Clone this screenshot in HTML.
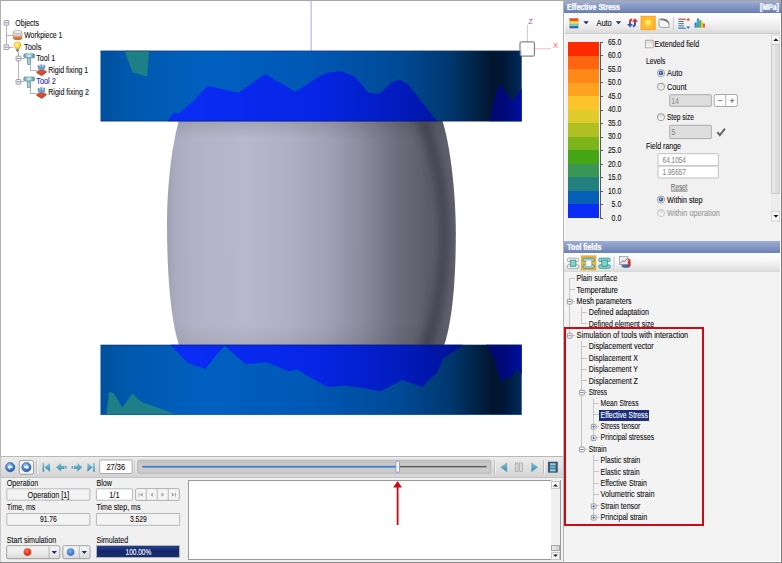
<!DOCTYPE html>
<html><head><meta charset="utf-8"><title>Effective Stress</title>
<style>
html,body{margin:0;padding:0;}
body{width:782px;height:563px;overflow:hidden;position:relative;background:#f0f0f0;font-family:"Liberation Sans",sans-serif;}
.a{position:absolute;box-sizing:border-box;}
.t{position:absolute;white-space:nowrap;line-height:10px;transform-origin:0 50%;-webkit-text-stroke:0.1px currentColor;}
svg{position:absolute;left:0;top:0;}
</style></head><body>
<div class="a" style="left:0.00px;top:0.00px;width:563.50px;height:456.00px;background:#fff;border-top:1px solid #a6a6a6;border-left:1px solid #b0b0b0;"></div>
<div class="a" style="left:562.60px;top:0.00px;width:1.00px;height:563.00px;background:#b4b4b4;"></div>
<svg width="563" height="456" viewBox="0 0 563 456">
<defs>
<linearGradient id="tb" x1="100.5" x2="521.5" y1="0" y2="0" gradientUnits="userSpaceOnUse">
<stop offset="0" stop-color="#00509c"/>
<stop offset="0.06" stop-color="#0058ac"/>
<stop offset="0.25" stop-color="#0060c0"/>
<stop offset="0.49" stop-color="#0058b6"/>
<stop offset="0.71" stop-color="#004a96"/>
<stop offset="0.83" stop-color="#003870"/>
<stop offset="0.89" stop-color="#002448"/>
<stop offset="0.935" stop-color="#00142c"/>
<stop offset="0.965" stop-color="#001a3c"/>
<stop offset="1" stop-color="#002a5e"/>
</linearGradient>
<linearGradient id="bb" x1="100.5" x2="521.5" y1="0" y2="0" gradientUnits="userSpaceOnUse">
<stop offset="0" stop-color="#0828d8"/>
<stop offset="0.2" stop-color="#0a2cf4"/>
<stop offset="0.5" stop-color="#0626e6"/>
<stop offset="0.7" stop-color="#021cc0"/>
<stop offset="0.82" stop-color="#0014a0"/>
<stop offset="0.92" stop-color="#000a70"/>
<stop offset="0.96" stop-color="#000878"/>
<stop offset="1" stop-color="#0010a0"/>
</linearGradient>
<linearGradient id="wp" x1="167" x2="456" y1="0" y2="0" gradientUnits="userSpaceOnUse">
<stop offset="0" stop-color="#a0a0b4"/>
<stop offset="0.03" stop-color="#ababbf"/>
<stop offset="0.1" stop-color="#b3b3c7"/>
<stop offset="0.27" stop-color="#b8b8cc"/>
<stop offset="0.42" stop-color="#b0b0c4"/>
<stop offset="0.55" stop-color="#a2a2b6"/>
<stop offset="0.67" stop-color="#8c8c9f"/>
<stop offset="0.8" stop-color="#6c6c7c"/>
<stop offset="0.9" stop-color="#5c5c6a"/>
<stop offset="1" stop-color="#62626f"/>
</linearGradient>
<filter id="bl" x="-50%" y="-20%" width="200%" height="140%"><feGaussianBlur stdDeviation="4.5"/></filter>
<clipPath id="wc"><path d="M178.8,121 C172,145 167,185 167,224 C167,272 170.5,320 179,345 L444.2,345 C452.6,320 455.8,278 455.8,234 C455.8,190 450,145 442.5,121 Z"/></clipPath>
<linearGradient id="wv" x1="0" x2="0" y1="121" y2="345" gradientUnits="userSpaceOnUse">
<stop offset="0" stop-color="#000" stop-opacity="0.10"/>
<stop offset="0.08" stop-color="#000" stop-opacity="0"/>
<stop offset="0.9" stop-color="#000" stop-opacity="0"/>
<stop offset="1" stop-color="#000" stop-opacity="0.06"/>
</linearGradient>
</defs>
<rect x="310.6" y="0" width="1" height="51" fill="#a8a8e8"/>
<path d="M178.8,121 C172,145 167,185 167,224 C167,272 170.5,320 179,345 L444.2,345 C452.6,320 455.8,278 455.8,234 C455.8,190 450,145 442.5,121 Z" fill="url(#wp)"/>
<path d="M178.8,121 C172,145 167,185 167,224 C167,272 170.5,320 179,345 L444.2,345 C452.6,320 455.8,278 455.8,234 C455.8,190 450,145 442.5,121 Z" fill="url(#wv)"/>
<g clip-path="url(#wc)"><path d="M421,118 C436,150 444,195 444.5,233 C444.5,272 438,318 425,348" fill="none" stroke="#363644" stroke-width="11" opacity="0.62" filter="url(#bl)"/></g>
<rect x="100.5" y="50.7" width="421.2" height="70.6" fill="url(#tb)"/>
<polygon points="124.5,50.7 149,50.7 147,76.5 132.4,72.3" fill="#1f7f86"/>
<polygon points="167.6,121.3 173.8,112.0 178.0,114.0 193.5,101.0 207.5,85.8 238.5,92.8 265.0,74.0 295.0,91.4 305.0,85.8 316.0,78.0 326.0,73.0 341.0,71.0 355.6,77.3 368.3,92.8 379.5,93.7 390.8,83.0 399.2,79.3 407.7,83.8 437.2,121.3" fill="url(#bb)"/>
<polygon points="489.2,121.3 496.3,90.0 501.0,84.4 511.7,101.3 521.7,88.6 521.7,121.3" fill="url(#bb)"/>
<rect x="100.5" y="50.7" width="421.2" height="0.8" fill="#203060" opacity="0.6"/>
<rect x="100.5" y="120.6" width="421.2" height="0.8" fill="#102050" opacity="0.6"/>
<rect x="100.5" y="344.8" width="421.2" height="70" fill="url(#tb)"/>
<polygon points="170.4,344.8 187.8,363.0 205.3,368.8 224.4,345.7 245.5,364.0 266.6,362.3 289.0,371.6 297.5,369.3 305.0,374.4 327.5,387.0 344.4,385.6 364.0,387.9 380.4,391.3 402.0,380.0 422.6,387.0 428.8,380.0 437.2,373.0 442.8,359.0 461.0,346.8 463.0,344.8" fill="url(#bb)"/>
<polygon points="486.0,344.8 487.8,347.6 493.5,357.5 500.5,381.4 511.8,375.8 517.4,368.8 521.7,374.4 521.7,344.8" fill="url(#bb)"/>
<polygon points="106.3,414.8 109.0,392.0 114.0,393.2 122.3,407.6 132.4,393.5 141.4,402.0 149.9,404.8 176.6,414.8" fill="#1f7f86"/>
<rect x="100.5" y="344.8" width="421.2" height="0.8" fill="#102050" opacity="0.6"/>
<rect x="100.5" y="414" width="421.2" height="0.8" fill="#0050c0" opacity="0.7"/>
<rect x="527" y="25" width="0.9" height="24" fill="#e6b8e6"/>
<rect x="527" y="48.3" width="24" height="0.9" fill="#ffb4b4"/>
<rect x="520" y="41.9" width="14.4" height="14.2" rx="1.2" fill="#fff" fill-opacity="0.75" stroke="#585858" stroke-width="0.9"/>
<text x="528.3" y="24" font-family="Liberation Sans" font-size="7.6" fill="#b050b0">Z</text>
<text x="553" y="47.8" font-family="Liberation Sans" font-size="7.6" fill="#ff5a5a">X</text>
</svg>
<div class="a" style="left:5.90px;top:25.50px;width:0.80px;height:18.80px;background:#b4b4b4;"></div>
<div class="a" style="left:6.30px;top:35.20px;width:6.70px;height:0.80px;background:#b4b4b4;"></div>
<div class="a" style="left:9.00px;top:46.60px;width:4.00px;height:0.80px;background:#b4b4b4;"></div>
<div class="a" style="left:18.00px;top:52.00px;width:0.80px;height:27.00px;background:#b4b4b4;"></div>
<div class="a" style="left:21.00px;top:58.00px;width:3.00px;height:0.80px;background:#b4b4b4;"></div>
<div class="a" style="left:21.00px;top:81.40px;width:3.00px;height:0.80px;background:#b4b4b4;"></div>
<div class="a" style="left:29.80px;top:63.50px;width:0.80px;height:7.10px;background:#b4b4b4;"></div>
<div class="a" style="left:30.20px;top:70.20px;width:6.80px;height:0.80px;background:#b4b4b4;"></div>
<div class="a" style="left:29.80px;top:87.00px;width:0.80px;height:6.30px;background:#b4b4b4;"></div>
<div class="a" style="left:30.20px;top:92.90px;width:6.80px;height:0.80px;background:#b4b4b4;"></div>
<svg class="a" style="left:1px;top:17px" width="12" height="12" viewBox="0 0 12 12"><rect x="3.05" y="3.45" width="4.70" height="4.70" rx="0.5" fill="#fdfdfd" stroke="#8a8a8a" stroke-width="0.85"/><rect x="4.00" y="5.40" width="2.8" height="0.8" fill="#4a5ab4"/></svg>
<svg class="a" style="left:1px;top:42px" width="12" height="12" viewBox="0 0 12 12"><rect x="3.05" y="2.75" width="4.70" height="4.70" rx="0.5" fill="#fdfdfd" stroke="#8a8a8a" stroke-width="0.85"/><rect x="4.00" y="4.70" width="2.8" height="0.8" fill="#4a5ab4"/></svg>
<svg class="a" style="left:13px;top:53px" width="12" height="12" viewBox="0 0 12 12"><rect x="3.15" y="3.15" width="4.70" height="4.70" rx="0.5" fill="#fdfdfd" stroke="#8a8a8a" stroke-width="0.85"/><rect x="4.10" y="5.10" width="2.8" height="0.8" fill="#4a5ab4"/></svg>
<svg class="a" style="left:13px;top:76px" width="12" height="12" viewBox="0 0 12 12"><rect x="3.05" y="3.45" width="4.70" height="4.70" rx="0.5" fill="#fdfdfd" stroke="#8a8a8a" stroke-width="0.85"/><rect x="4.00" y="5.40" width="2.8" height="0.8" fill="#4a5ab4"/></svg>
<div class="t" style="left:15px;top:19px;font-size:8.20px;color:#101010;transform:translate(0.30px,0.11px) scaleX(0.8561);">Objects</div>
<div class="t" style="left:24px;top:31px;font-size:8.20px;color:#101010;transform:translate(0.20px,0.41px) scaleX(0.8431);">Workpiece 1</div>
<div class="t" style="left:24px;top:42px;font-size:8.20px;color:#101010;transform:translate(0.00px,0.61px) scaleX(0.9089);">Tools</div>
<div class="t" style="left:36px;top:54px;font-size:8.20px;color:#101010;transform:translate(0.20px,0.01px) scaleX(0.8774);">Tool 1</div>
<div class="t" style="left:48px;top:66px;font-size:8.20px;color:#101010;transform:translate(0.20px,0.21px) scaleX(0.8542);">Rigid fixing 1</div>
<div class="t" style="left:36px;top:77px;font-size:8.20px;color:#2a1ec8;transform:translate(0.20px,0.31px) scaleX(0.9003);">Tool 2</div>
<div class="t" style="left:48px;top:88px;font-size:8.20px;color:#101010;transform:translate(0.20px,0.01px) scaleX(0.8669);">Rigid fixing 2</div>
<svg width="100" height="100" viewBox="0 0 100 100"><defs><linearGradient id="cy" x1="0" x2="0" y1="0" y2="1"><stop offset="0" stop-color="#f4f4f4"/><stop offset="0.45" stop-color="#d8c8c0"/><stop offset="0.75" stop-color="#e07830"/><stop offset="1" stop-color="#c85010"/></linearGradient><linearGradient id="hm" x1="0" x2="1" y1="0" y2="0"><stop offset="0" stop-color="#5aa0b4"/><stop offset="0.5" stop-color="#d4eef4"/><stop offset="1" stop-color="#4a8ca0"/></linearGradient><radialGradient id="bu" cx="0.4" cy="0.35" r="0.7"><stop offset="0" stop-color="#fff8b0"/><stop offset="0.6" stop-color="#ffd428"/><stop offset="1" stop-color="#e8a010"/></radialGradient></defs><path d="M13.2,32 L13.2,38 A4.4,1.8 0 0 0 22,38 L22,32 Z" fill="url(#cy)" stroke="#a05828" stroke-width="0.4"/><ellipse cx="17.6" cy="32" rx="4.4" ry="1.7" fill="#ececec" stroke="#909090" stroke-width="0.5"/><path d="M17.5,42 C14.6,42 13.6,44 13.9,45.6 C14.2,47.2 15.8,47.8 16.2,49.4 L18.8,49.4 C19.2,47.8 20.8,47.2 21.1,45.6 C21.4,44 20.4,42 17.5,42 Z" fill="url(#bu)" stroke="#d09010" stroke-width="0.4"/><rect x="16.3" y="49.4" width="2.4" height="1.7" fill="#4a78b0"/><rect x="16.9" y="51" width="1.2" height="0.8" fill="#405070"/><path d="M24.8,53.8 h8.6 a1,1 0 0 1 1,1 v2.2 a1,1 0 0 1 -1,1 h-8.6 a1,1 0 0 1 -1,-1 v-2.2 a1,1 0 0 1 1,-1 Z" fill="url(#hm)" stroke="#3c7488" stroke-width="0.5"/><rect x="27.6" y="58.0" width="2.8" height="6.4" fill="url(#hm)" stroke="#3c7488" stroke-width="0.5"/><path d="M24.8,76.9 h8.6 a1,1 0 0 1 1,1 v2.2 a1,1 0 0 1 -1,1 h-8.6 a1,1 0 0 1 -1,-1 v-2.2 a1,1 0 0 1 1,-1 Z" fill="url(#hm)" stroke="#3c7488" stroke-width="0.5"/><rect x="27.6" y="81.1" width="2.8" height="6.4" fill="url(#hm)" stroke="#3c7488" stroke-width="0.5"/><path d="M36.6,71.8 l4.4,-2.6 l5.4,2 l-4.6,3.6 Z" fill="#e4492a" stroke="#a82c10" stroke-width="0.4"/><path d="M36.6,71.8 l0,1.2 l5.2,3 l4.6,-3.6 l0,-1.2 l-4.6,3.6 Z" fill="#b83014"/><rect x="38.1" y="66.2" width="1.1" height="3.4" fill="#4c84bc"/><circle cx="38.6" cy="66.2" r="1.0" fill="#8cbce0" stroke="#3c6c9c" stroke-width="0.35"/><rect x="40.9" y="65.4" width="1.1" height="3.4" fill="#4c84bc"/><circle cx="41.4" cy="65.4" r="1.0" fill="#8cbce0" stroke="#3c6c9c" stroke-width="0.35"/><rect x="43.7" y="66.0" width="1.1" height="3.4" fill="#4c84bc"/><circle cx="44.2" cy="66.0" r="1.0" fill="#8cbce0" stroke="#3c6c9c" stroke-width="0.35"/><rect x="39.5" y="67.6" width="1.1" height="3.4" fill="#4c84bc"/><circle cx="40.0" cy="67.6" r="1.0" fill="#8cbce0" stroke="#3c6c9c" stroke-width="0.35"/><rect x="42.5" y="68.0" width="1.1" height="3.4" fill="#4c84bc"/><circle cx="43.0" cy="68.0" r="1.0" fill="#8cbce0" stroke="#3c6c9c" stroke-width="0.35"/><path d="M36.6,94.6 l4.4,-2.6 l5.4,2 l-4.6,3.6 Z" fill="#e4492a" stroke="#a82c10" stroke-width="0.4"/><path d="M36.6,94.6 l0,1.2 l5.2,3 l4.6,-3.6 l0,-1.2 l-4.6,3.6 Z" fill="#b83014"/><rect x="38.1" y="89.0" width="1.1" height="3.4" fill="#4c84bc"/><circle cx="38.6" cy="89.0" r="1.0" fill="#8cbce0" stroke="#3c6c9c" stroke-width="0.35"/><rect x="40.9" y="88.2" width="1.1" height="3.4" fill="#4c84bc"/><circle cx="41.4" cy="88.2" r="1.0" fill="#8cbce0" stroke="#3c6c9c" stroke-width="0.35"/><rect x="43.7" y="88.8" width="1.1" height="3.4" fill="#4c84bc"/><circle cx="44.2" cy="88.8" r="1.0" fill="#8cbce0" stroke="#3c6c9c" stroke-width="0.35"/><rect x="39.5" y="90.4" width="1.1" height="3.4" fill="#4c84bc"/><circle cx="40.0" cy="90.4" r="1.0" fill="#8cbce0" stroke="#3c6c9c" stroke-width="0.35"/><rect x="42.5" y="90.8" width="1.1" height="3.4" fill="#4c84bc"/><circle cx="43.0" cy="90.8" r="1.0" fill="#8cbce0" stroke="#3c6c9c" stroke-width="0.35"/></svg>
<div class="a" style="left:0.00px;top:456.00px;width:563.00px;height:1.00px;background:#b8b8b8;"></div>
<div class="a" style="left:0.00px;top:457.00px;width:562.60px;height:20.00px;background:linear-gradient(#ececec,#dedede 60%,#d4d4d4);border-left:1px solid #c0c0c0;"></div>
<div class="a" style="left:0.00px;top:477.00px;width:562.60px;height:86.00px;background:#f0f0f0;border-left:1px solid #c8c8c8;"></div>
<div class="a" style="left:0.00px;top:476.60px;width:562.60px;height:0.80px;background:#c4c4c4;"></div>
<div class="a" style="left:0.00px;top:562.00px;width:563.00px;height:1.00px;background:#8c8c8c;"></div>
<div class="a" style="left:96.40px;top:545.30px;width:83.80px;height:12.50px;background:#e4e4e4;border:0.7px solid #b4b4b4;"></div>
<div class="a" style="left:97.40px;top:546.40px;width:81.50px;height:10.20px;background:linear-gradient(#26408e,#16286c 45%,#1a2e74);"></div>
<div class="a" style="left:187.60px;top:479.60px;width:373.00px;height:80.60px;background:#fff;border:0.8px solid #9a9a9a;"></div>
<div class="a" style="left:551.20px;top:480.40px;width:8.60px;height:79.00px;background:#f0f0f0;"></div>
<div class="a" style="left:551.20px;top:481.40px;width:8.60px;height:8.00px;background:#f6f6f6;border:0.6px solid #c8c8c8;"></div>
<div class="a" style="left:551.20px;top:551.60px;width:8.60px;height:8.00px;background:#f6f6f6;border:0.6px solid #c8c8c8;"></div>
<div class="a" style="left:551.20px;top:545.40px;width:8.60px;height:6.00px;background:linear-gradient(90deg,#e8e8e8,#d0d0d0);border:0.6px solid #a8a8a8;"></div>
<svg width="563" height="563" viewBox="0 0 563 563"><path d="M553,486.6 h5 l-2.5,-2.6 Z" fill="#202020"/><path d="M553,554.4 h5 l-2.5,2.6 Z" fill="#202020"/></svg>
<svg width="563" height="563" viewBox="0 0 563 563"><defs><radialGradient id="cb" cx="0.4" cy="0.3" r="0.8"><stop offset="0" stop-color="#9cc4f4"/><stop offset="0.6" stop-color="#3c78d0"/><stop offset="1" stop-color="#2050a0"/></radialGradient><linearGradient id="tl" x1="0" x2="0" y1="0" y2="1"><stop offset="0" stop-color="#7cc4d8"/><stop offset="1" stop-color="#3a8ca8"/></linearGradient><radialGradient id="rb" cx="0.4" cy="0.35" r="0.7"><stop offset="0" stop-color="#ff7050"/><stop offset="1" stop-color="#d81808"/></radialGradient><radialGradient id="bb2" cx="0.4" cy="0.35" r="0.7"><stop offset="0" stop-color="#78b0f0"/><stop offset="1" stop-color="#2868c0"/></radialGradient><linearGradient id="btn" x1="0" x2="0" y1="0" y2="1"><stop offset="0" stop-color="#f6f6f6"/><stop offset="0.5" stop-color="#ececec"/><stop offset="1" stop-color="#d8d8d8"/></linearGradient></defs><rect x="99.70" y="460.00" width="32.40" height="13.50" rx="1.0" fill="#fff" stroke="#9c9c9c" stroke-width="0.80"/><rect x="6.80" y="488.80" width="83.00" height="11.40" rx="0.6" fill="#f3f3f3" stroke="#a8a8a8" stroke-width="0.80"/><rect x="96.40" y="488.80" width="36.00" height="11.40" rx="0.6" fill="#fff" stroke="#a8a8a8" stroke-width="0.80"/><rect x="6.80" y="513.50" width="83.00" height="11.80" rx="0.6" fill="#f3f3f3" stroke="#a8a8a8" stroke-width="0.80"/><rect x="96.40" y="513.50" width="83.20" height="11.80" rx="0.6" fill="#f3f3f3" stroke="#a8a8a8" stroke-width="0.80"/><g transform="translate(0,0.6)"><circle cx="10.2" cy="466.6" r="4.6" fill="url(#cb)" stroke="#284c90" stroke-width="0.6"/><path d="M7.4,466.6 l2.6,-2.4 v1.5 h2.4 v1.8 h-2.4 v1.5 Z" fill="#fff"/><rect x="19.3" y="459.8" width="14.2" height="13.8" rx="1.8" fill="#f6f6f6" stroke="#8c8c8c" stroke-width="0.8"/><circle cx="26.4" cy="466.6" r="4.6" fill="url(#cb)" stroke="#284c90" stroke-width="0.6"/><path d="M29.2,466.6 l-2.6,-2.4 v1.5 h-2.4 v1.8 h2.4 v1.5 Z" fill="#fff"/><rect x="36.2" y="460" width="0.8" height="13.5" fill="#b4b4b4"/><rect x="37" y="460" width="0.8" height="13.5" fill="#f8f8f8"/><rect x="42.6" y="462.3" width="1.6" height="8.8" fill="url(#tl)"/><path d="M50,462.3 L44.6,466.7 L50,471.1 Z" fill="url(#tl)"/><path d="M56,466.7 l5,-4.2 v2.6 h3.4 v3.2 h-3.4 v2.6 Z" fill="url(#tl)"/><rect x="65.2" y="465.4" width="1.4" height="2.6" fill="#4a9cb8"/><path d="M82.4,466.7 l-5,-4.2 v2.6 h-3.4 v3.2 h3.4 v2.6 Z" fill="url(#tl)"/><rect x="71.6" y="465.4" width="1.4" height="2.6" fill="#4a9cb8"/><rect x="93.2" y="462.3" width="1.6" height="8.8" fill="url(#tl)"/><path d="M87.4,462.3 L92.8,466.7 L87.4,471.1 Z" fill="url(#tl)"/></g><rect x="134.6" y="460" width="0.8" height="13.5" fill="#b4b4b4"/><rect x="135.4" y="460" width="0.8" height="13.5" fill="#f8f8f8"/><rect x="494.2" y="460" width="0.8" height="13.5" fill="#b4b4b4"/><rect x="495.0" y="460" width="0.8" height="13.5" fill="#f8f8f8"/><rect x="543.2" y="460" width="0.8" height="13.5" fill="#b4b4b4"/><rect x="544.0" y="460" width="0.8" height="13.5" fill="#f8f8f8"/><rect x="137.6" y="460.2" width="353.4" height="13" rx="1.5" fill="#cbcbcb" stroke="#b0b0b0" stroke-width="0.8"/><rect x="138.4" y="461" width="351.8" height="2.2" fill="#c0c0c0" opacity="0.7"/><rect x="142.6" y="465.9" width="344" height="1.5" fill="#5c5c5c"/><rect x="142.6" y="465.9" width="255" height="1.5" fill="#3c80e0"/><rect x="395.9" y="461.3" width="3.6" height="10.8" rx="0.8" fill="#f4f4f8" stroke="#7888c8" stroke-width="0.7"/><path d="M506.8,462.9 L500.8,467.3 L506.8,471.7 Z" fill="url(#tl)" stroke="#3880a0" stroke-width="0.3"/><rect x="515.2" y="463" width="2.8" height="8.6" fill="#d8d8d8" stroke="#9a9a9a" stroke-width="0.6"/><rect x="519.6" y="463" width="2.8" height="8.6" fill="#d8d8d8" stroke="#9a9a9a" stroke-width="0.6"/><path d="M531.6,462.9 L537.6,467.3 L531.6,471.7 Z" fill="url(#tl)" stroke="#3880a0" stroke-width="0.3"/><rect x="548.2" y="462" width="9.2" height="10.2" fill="#3a5878" stroke="#26384c" stroke-width="0.5"/><rect x="550" y="463.2" width="5.6" height="2.2" fill="#8cd0e0"/><rect x="550" y="466.2" width="5.6" height="2.2" fill="#70b8d0"/><rect x="550" y="469.2" width="5.6" height="2.2" fill="#8cd0e0"/><rect x="396.7" y="486" width="1.8" height="39" fill="#cc0a14"/><path d="M397.6,481 L393.2,487.6 L402,487.6 Z" fill="#cc0a14"/><rect x="6.6" y="545.7" width="53.2" height="13" rx="1.6" fill="url(#btn)" stroke="#8e8e8e" stroke-width="0.8"/><rect x="48.6" y="546.4" width="0.8" height="11.6" fill="#a8a8a8"/><circle cx="27.4" cy="552.1" r="3.8" fill="url(#rb)"/><path d="M51.6,550.9 h5.4 l-2.7,3 Z" fill="#1c2c84"/><rect x="62.8" y="545.7" width="27.2" height="13" rx="1.6" fill="url(#btn)" stroke="#8e8e8e" stroke-width="0.8"/><rect x="78.8" y="546.4" width="0.8" height="11.6" fill="#a8a8a8"/><circle cx="70.6" cy="552.1" r="3.8" fill="url(#bb2)"/><path d="M81.6,550.9 h5.4 l-2.7,3 Z" fill="#1c2c84"/><rect x="135.6" y="488.6" width="43.8" height="11.8" rx="1.4" fill="#f4f4f4" stroke="#a0a0a0" stroke-width="0.8"/><rect x="145.80" y="489" width="0.8" height="11" fill="#a8a8a8"/><rect x="156.80" y="489" width="0.8" height="11" fill="#a8a8a8"/><rect x="167.80" y="489" width="0.8" height="11" fill="#a8a8a8"/><rect x="138.5" y="492.6" width="0.9" height="4.2" fill="#a4a4a4"/><path d="M142.5,492.6 l-2.6,2.1 l2.6,2.1 Z" fill="#a4a4a4"/><path d="M152.9,492.6 l-2.6,2.1 l2.6,2.1 Z" fill="#a4a4a4"/><path d="M161.5,492.6 l2.6,2.1 l-2.6,2.1 Z" fill="#a4a4a4"/><rect x="175.0" y="492.6" width="0.9" height="4.2" fill="#a4a4a4"/><path d="M171.9,492.6 l2.6,2.1 l-2.6,2.1 Z" fill="#a4a4a4"/></svg>
<div class="t" style="left:106px;top:462px;font-size:8.20px;color:#101010;transform:translate(0.40px,0.61px) scaleX(0.9162);">27/36</div>
<div class="t" style="left:6px;top:478px;font-size:8.20px;color:#101010;transform:translate(0.80px,0.81px) scaleX(0.8719);">Operation</div>
<div class="t" style="left:96px;top:478px;font-size:8.20px;color:#101010;transform:translate(0.40px,0.81px) scaleX(0.8664);">Blow</div>
<div class="t" style="left:27px;top:490px;font-size:8.20px;color:#101010;transform:translate(0.60px,0.71px) scaleX(0.8775);">Operation [1]</div>
<div class="t" style="left:109px;top:490px;font-size:8.20px;color:#101010;transform:translate(0.20px,0.71px) scaleX(0.9123);">1/1</div>
<div class="t" style="left:6px;top:503px;font-size:8.20px;color:#101010;transform:translate(0.80px,0.31px) scaleX(0.8561);">Time, ms</div>
<div class="t" style="left:96px;top:503px;font-size:8.20px;color:#101010;transform:translate(0.40px,0.31px) scaleX(0.8636);">Time step, ms</div>
<div class="t" style="left:39px;top:515px;font-size:8.20px;color:#101010;transform:translate(0.90px,0.31px) scaleX(0.8284);">91.76</div>
<div class="t" style="left:129px;top:515px;font-size:8.20px;color:#101010;transform:translate(0.90px,0.31px) scaleX(0.8284);">3.529</div>
<div class="t" style="left:6px;top:535px;font-size:8.20px;color:#101010;transform:translate(0.80px,0.91px) scaleX(0.8741);">Start simulation</div>
<div class="t" style="left:96px;top:535px;font-size:8.20px;color:#101010;transform:translate(0.40px,0.91px) scaleX(0.8776);">Simulated</div>
<div class="t" style="left:125px;top:547px;font-size:8.20px;color:#fff;transform:translate(0.50px,0.71px) scaleX(0.7970);">100.00%</div>
<div class="a" style="left:563.60px;top:0.00px;width:218.40px;height:563.00px;background:#f1f1f1;"></div>
<div class="a" style="left:563.60px;top:0.00px;width:218.40px;height:1.00px;background:#a6a6a6;"></div>
<div class="a" style="left:563.60px;top:1.00px;width:217.40px;height:12.40px;background:linear-gradient(#9eadd2,#8597c4 45%,#6f84b6 90%,#6478aa);"></div>
<div class="a" style="left:563.60px;top:13.20px;width:217.40px;height:19.80px;background:linear-gradient(#ffffff,#f8f8f8 35%,#e6e6e6 80%,#d8d8d8);"></div>
<div class="a" style="left:563.60px;top:33.00px;width:217.40px;height:0.80px;background:#d0d0d0;"></div>
<div class="a" style="left:781.00px;top:0.00px;width:1.00px;height:563.00px;background:#7c7c7c;"></div>
<div class="a" style="left:780.00px;top:13.00px;width:1.00px;height:550.00px;background:#fafafa;"></div>
<div class="a" style="left:564.00px;top:13.00px;width:1.00px;height:228.00px;background:#fafafa;"></div>
<div class="a" style="left:564.00px;top:254.00px;width:1.00px;height:308.00px;background:#fafafa;"></div>
<div class="t" style="left:567px;top:2px;font-size:8.30px;color:#fff;font-weight:bold;transform:translate(0.00px,0.11px) scaleX(0.8509);text-shadow:0 0 1px #c8d4f0;">Effective Stress</div>
<div class="t" style="left:760px;top:2px;font-size:8.30px;color:#fff;font-weight:bold;transform:translate(0.00px,0.11px) scaleX(0.8320);text-shadow:0 0 1px #c8d4f0;">[MPa]</div>
<div class="a" style="left:568.00px;top:42.00px;width:30.60px;height:13.84px;background:#ff2a00;"></div>
<div class="a" style="left:568.00px;top:55.54px;width:30.60px;height:13.84px;background:#ff6410;"></div>
<div class="a" style="left:568.00px;top:69.08px;width:30.60px;height:13.84px;background:#ff8818;"></div>
<div class="a" style="left:568.00px;top:82.62px;width:30.60px;height:13.84px;background:#ffa220;"></div>
<div class="a" style="left:568.00px;top:96.16px;width:30.60px;height:13.84px;background:#fcc42a;"></div>
<div class="a" style="left:568.00px;top:109.70px;width:30.60px;height:13.84px;background:#e0cc2c;"></div>
<div class="a" style="left:568.00px;top:123.24px;width:30.60px;height:13.84px;background:#b0c022;"></div>
<div class="a" style="left:568.00px;top:136.78px;width:30.60px;height:13.84px;background:#7eb41c;"></div>
<div class="a" style="left:568.00px;top:150.32px;width:30.60px;height:13.84px;background:#44a614;"></div>
<div class="a" style="left:568.00px;top:163.86px;width:30.60px;height:13.84px;background:#3a9656;"></div>
<div class="a" style="left:568.00px;top:177.40px;width:30.60px;height:13.84px;background:#22807e;"></div>
<div class="a" style="left:568.00px;top:190.94px;width:30.60px;height:13.84px;background:#0660b6;"></div>
<div class="a" style="left:568.00px;top:204.48px;width:30.60px;height:13.84px;background:#0a2cf4;"></div>
<div class="a" style="left:599.70px;top:42.00px;width:1.00px;height:176.42px;background:#585858;"></div>
<div class="a" style="left:599.70px;top:41.80px;width:3.20px;height:0.90px;background:#585858;"></div>
<div class="t" style="left:608px;top:37px;font-size:8.20px;color:#101010;transform:translate(0.00px,0.71px) scaleX(0.8396);">65.0</div>
<div class="a" style="left:599.70px;top:55.34px;width:3.20px;height:0.90px;background:#585858;"></div>
<div class="t" style="left:608px;top:51px;font-size:8.20px;color:#101010;transform:translate(0.00px,0.25px) scaleX(0.8396);">60.0</div>
<div class="a" style="left:599.70px;top:68.88px;width:3.20px;height:0.90px;background:#585858;"></div>
<div class="t" style="left:608px;top:64px;font-size:8.20px;color:#101010;transform:translate(0.00px,0.79px) scaleX(0.8396);">55.0</div>
<div class="a" style="left:599.70px;top:82.42px;width:3.20px;height:0.90px;background:#585858;"></div>
<div class="t" style="left:608px;top:78px;font-size:8.20px;color:#101010;transform:translate(0.00px,0.33px) scaleX(0.8396);">50.0</div>
<div class="a" style="left:599.70px;top:95.96px;width:3.20px;height:0.90px;background:#585858;"></div>
<div class="t" style="left:608px;top:91px;font-size:8.20px;color:#101010;transform:translate(0.00px,0.87px) scaleX(0.8396);">45.0</div>
<div class="a" style="left:599.70px;top:109.50px;width:3.20px;height:0.90px;background:#585858;"></div>
<div class="t" style="left:608px;top:105px;font-size:8.20px;color:#101010;transform:translate(0.00px,0.41px) scaleX(0.8396);">40.0</div>
<div class="a" style="left:599.70px;top:123.04px;width:3.20px;height:0.90px;background:#585858;"></div>
<div class="t" style="left:608px;top:118px;font-size:8.20px;color:#101010;transform:translate(0.00px,0.95px) scaleX(0.8396);">35.0</div>
<div class="a" style="left:599.70px;top:136.58px;width:3.20px;height:0.90px;background:#585858;"></div>
<div class="t" style="left:608px;top:132px;font-size:8.20px;color:#101010;transform:translate(0.00px,0.49px) scaleX(0.8396);">30.0</div>
<div class="a" style="left:599.70px;top:150.12px;width:3.20px;height:0.90px;background:#585858;"></div>
<div class="t" style="left:608px;top:146px;font-size:8.20px;color:#101010;transform:translate(0.00px,0.03px) scaleX(0.8396);">25.0</div>
<div class="a" style="left:599.70px;top:163.66px;width:3.20px;height:0.90px;background:#585858;"></div>
<div class="t" style="left:608px;top:159px;font-size:8.20px;color:#101010;transform:translate(0.00px,0.57px) scaleX(0.8396);">20.0</div>
<div class="a" style="left:599.70px;top:177.20px;width:3.20px;height:0.90px;background:#585858;"></div>
<div class="t" style="left:608px;top:173px;font-size:8.20px;color:#101010;transform:translate(0.00px,0.11px) scaleX(0.8396);">15.0</div>
<div class="a" style="left:599.70px;top:190.74px;width:3.20px;height:0.90px;background:#585858;"></div>
<div class="t" style="left:608px;top:186px;font-size:8.20px;color:#101010;transform:translate(0.00px,0.65px) scaleX(0.8396);">10.0</div>
<div class="a" style="left:599.70px;top:204.28px;width:3.20px;height:0.90px;background:#585858;"></div>
<div class="t" style="left:611px;top:200px;font-size:8.20px;color:#101010;transform:translate(0.60px,0.19px) scaleX(0.8597);">5.0</div>
<div class="a" style="left:599.70px;top:217.82px;width:3.20px;height:0.90px;background:#585858;"></div>
<div class="t" style="left:611px;top:213px;font-size:8.20px;color:#101010;transform:translate(0.60px,0.73px) scaleX(0.8597);">0.0</div>
<svg width="782" height="563" viewBox="0 0 782 563"><defs><radialGradient id="rd" cx="0.5" cy="0.5" r="0.5"><stop offset="0" stop-color="#60b0f0"/><stop offset="0.6" stop-color="#2060b0"/><stop offset="1" stop-color="#103870"/></radialGradient><linearGradient id="rbg" x1="0" x2="0" y1="0" y2="1"><stop offset="0" stop-color="#d8d8d8"/><stop offset="1" stop-color="#fcfcfc"/></linearGradient><linearGradient id="pal" x1="0" x2="0" y1="0" y2="1"><stop offset="0" stop-color="#e03820"/><stop offset="0.22" stop-color="#f05030"/><stop offset="0.3" stop-color="#f8d020"/><stop offset="0.5" stop-color="#f0e060"/><stop offset="0.58" stop-color="#70c8b8"/><stop offset="0.75" stop-color="#80d0d0"/><stop offset="0.82" stop-color="#2878c8"/><stop offset="1" stop-color="#2060b0"/></linearGradient><radialGradient id="sun" cx="0.5" cy="0.5" r="0.5"><stop offset="0" stop-color="#fff8a0"/><stop offset="0.7" stop-color="#ffe040"/><stop offset="1" stop-color="#f8c020"/></radialGradient></defs><circle cx="661.0" cy="73.2" r="3.6" fill="url(#rbg)" stroke="#8c8c8c" stroke-width="0.8"/><circle cx="661.0" cy="73.2" r="2.1" fill="url(#rd)"/><circle cx="660.5" cy="72.6" r="0.7" fill="#a8dcff"/><circle cx="661.0" cy="86.6" r="3.6" fill="url(#rbg)" stroke="#8c8c8c" stroke-width="0.8"/><circle cx="661.0" cy="117.2" r="3.6" fill="url(#rbg)" stroke="#8c8c8c" stroke-width="0.8"/><circle cx="661.0" cy="199.6" r="3.6" fill="url(#rbg)" stroke="#8c8c8c" stroke-width="0.8"/><circle cx="661.0" cy="199.6" r="2.1" fill="url(#rd)"/><circle cx="660.5" cy="199.0" r="0.7" fill="#a8dcff"/><circle cx="661.0" cy="213.0" r="3.6" fill="url(#rbg)" stroke="#c0c0c0" stroke-width="0.8"/><rect x="669.70" y="94.70" width="41.60" height="11.60" rx="0.6" fill="#dedede" stroke="#9c9c9c" stroke-width="0.80"/><rect x="669.70" y="125.30" width="41.60" height="13.30" rx="0.6" fill="#dedede" stroke="#9c9c9c" stroke-width="0.80"/><rect x="658.00" y="153.70" width="60.40" height="12.00" rx="0.6" fill="#fff" stroke="#b4b4b4" stroke-width="0.80"/><rect x="658.00" y="166.10" width="60.40" height="11.90" rx="0.6" fill="#fff" stroke="#b4b4b4" stroke-width="0.80"/><rect x="645.6" y="40.2" width="7.6" height="7.6" fill="url(#rbg)" stroke="#a4a4a4" stroke-width="0.8"/><rect x="714.2" y="94.5" width="23.2" height="12" rx="1.8" fill="#fcfcfc" stroke="#969696" stroke-width="0.8"/><rect x="725.4" y="95" width="0.8" height="11" fill="#a4a4a4"/><rect x="717.8" y="100.2" width="4.4" height="0.9" fill="#707070"/><rect x="729.8" y="100.2" width="4.6" height="0.9" fill="#707070"/><rect x="731.65" y="98.3" width="0.9" height="4.7" fill="#707070"/><path d="M716.6,132.8 l1.7,-1.3 l1.5,2.2 l4.4,-5.6 l1.5,1.1 l-5.9,7.5 Z" fill="#646464"/><rect x="771" y="34.6" width="9" height="186.8" fill="#ececec"/><rect x="771.3" y="35" width="8.4" height="9.2" fill="#f6f6f6" stroke="#c4c4c4" stroke-width="0.6"/><path d="M773.4,41 h5 l-2.5,-2.8 Z" fill="#181818"/><rect x="771.3" y="211.6" width="8.4" height="9.4" fill="#f6f6f6" stroke="#c4c4c4" stroke-width="0.6"/><path d="M773.4,215 h5 l-2.5,2.8 Z" fill="#181818"/><rect x="771.4" y="44.8" width="8.2" height="148.6" fill="#dcdcdc" stroke="#bcbcbc" stroke-width="0.6"/><rect x="772" y="45.4" width="3.2" height="147.4" fill="#e8e8e8"/><rect x="569.6" y="18.4" width="8.6" height="9.8" fill="url(#pal)" stroke="#b08060" stroke-width="0.3"/><path d="M583.4,21.2 h5.4 l-2.7,3 Z" fill="#182880"/><path d="M615.8,21.2 h5.4 l-2.7,3 Z" fill="#182880"/><linearGradient id="rbv" x1="0" x2="0" y1="18" y2="27.5" gradientUnits="userSpaceOnUse"><stop offset="0" stop-color="#e8281c"/><stop offset="0.45" stop-color="#d03038"/><stop offset="0.6" stop-color="#3058b8"/><stop offset="1" stop-color="#2058b8"/></linearGradient><path d="M630,27.6 l-2.9,-3.6 h1.9 v-2 c0,-2 1.2,-3.4 3.2,-3.4 v1.9 c-0.8,0 -1.2,0.6 -1.2,1.5 v2 h1.9 Z" fill="url(#rbv)"/><path d="M635,18.2 l2.9,3.6 h-1.9 v2 c0,2 -1.2,3.4 -3.2,3.4 v-1.9 c0.8,0 1.2,-0.6 1.2,-1.5 v-2 h-1.9 Z" fill="url(#rbv)"/><rect x="641" y="16.2" width="14.2" height="13.6" fill="#ffb434" stroke="#f49a18" stroke-width="0.8"/><path d="M653.27,24.84 L651.68,23.10 L650.92,24.94 Z" fill="#ffd83c"/><path d="M650.24,27.87 L650.34,25.52 L648.50,26.28 Z" fill="#ffd83c"/><path d="M645.96,27.87 L647.70,26.28 L645.86,25.52 Z" fill="#ffd83c"/><path d="M642.93,24.84 L645.28,24.94 L644.52,23.10 Z" fill="#ffd83c"/><path d="M642.93,20.56 L644.52,22.30 L645.28,20.46 Z" fill="#ffd83c"/><path d="M645.96,17.53 L645.86,19.88 L647.70,19.12 Z" fill="#ffd83c"/><path d="M650.24,17.53 L648.50,19.12 L650.34,19.88 Z" fill="#ffd83c"/><path d="M653.27,20.56 L650.92,20.46 L651.68,22.30 Z" fill="#ffd83c"/><circle cx="648.1" cy="22.7" r="3.6" fill="url(#sun)"/><path d="M659,19 h4.4 c3.6,0 5.6,2.6 5.6,5.4 v3 h-7.6 c-1.6,0 -2.4,-1 -2.4,-2.2 Z" fill="#f4f4f4" stroke="#8c8c8c" stroke-width="0.8"/><path d="M660.4,18.8 h3 c3.8,0 5.8,2.8 5.8,5.8 c-1.8,-3 -4.6,-4.6 -8.8,-4.4 Z" fill="#787878"/><rect x="673.4" y="17" width="0.8" height="12.4" fill="#a8a8a8"/><rect x="674.2" y="17" width="0.8" height="12.4" fill="#fcfcfc"/><rect x="678.4" y="18.6" width="7.4" height="1.1" fill="#d83020"/><rect x="678.4" y="20.9" width="5.4" height="1.1" fill="#408090"/><rect x="678.4" y="23.1" width="5.4" height="1.1" fill="#408090"/><rect x="678.4" y="25.4" width="5.4" height="1.1" fill="#408090"/><rect x="678.4" y="27.6" width="7.4" height="1.1" fill="#2868c8"/><path d="M686.2,20.4 h4 l-2,-2.4 Z" fill="#e03020"/><path d="M686.2,26.4 h4 l-2,2.4 Z" fill="#2868c8"/><rect x="694.6" y="22.6" width="2.2" height="5" fill="#3080c0"/><rect x="696.8" y="18.4" width="2.4" height="9.2" fill="#3aa0d0"/><rect x="699.2" y="20.2" width="2.2" height="7.4" fill="#58b030"/><rect x="701.4" y="22" width="1.8" height="5.6" fill="#f0c020"/><rect x="703.2" y="23.6" width="1.6" height="4" fill="#e04020"/></svg>
<div class="t" style="left:596px;top:18px;font-size:8.20px;color:#101010;transform:translate(0.40px,0.91px) scaleX(0.9129);">Auto</div>
<div class="t" style="left:654px;top:40px;font-size:8.20px;color:#101010;transform:translate(0.60px,0.01px) scaleX(0.8582);">Extended field</div>
<div class="t" style="left:646px;top:57px;font-size:8.20px;color:#101010;transform:translate(0.00px,0.11px) scaleX(0.8184);">Levels</div>
<div class="t" style="left:667px;top:69px;font-size:8.20px;color:#101010;transform:translate(0.00px,0.21px) scaleX(0.9129);">Auto</div>
<div class="t" style="left:667px;top:82px;font-size:8.20px;color:#101010;transform:translate(0.00px,0.61px) scaleX(0.8957);">Count</div>
<div class="t" style="left:671px;top:96px;font-size:8.20px;color:#8a8a8a;transform:translate(0.60px,0.51px) scaleX(0.7894);">14</div>
<div class="t" style="left:667px;top:113px;font-size:8.20px;color:#101010;transform:translate(0.00px,0.21px) scaleX(0.8005);">Step size</div>
<div class="t" style="left:671px;top:127px;font-size:8.20px;color:#8a8a8a;transform:translate(0.60px,0.51px) scaleX(0.8332);">5</div>
<div class="t" style="left:646px;top:142px;font-size:8.20px;color:#101010;transform:translate(0.00px,0.11px) scaleX(0.8531);">Field range</div>
<div class="t" style="left:662px;top:155px;font-size:8.20px;color:#8a8a8a;transform:translate(0.60px,0.81px) scaleX(0.7894);">64.1054</div>
<div class="t" style="left:662px;top:168px;font-size:8.20px;color:#8a8a8a;transform:translate(0.60px,0.01px) scaleX(0.7894);">1.95657</div>
<div class="t" style="left:670px;top:182px;font-size:8.20px;color:#707070;transform:translate(0.80px,0.51px) scaleX(0.7749);text-decoration:underline;">Reset</div>
<div class="t" style="left:667px;top:195px;font-size:8.20px;color:#101010;transform:translate(0.00px,0.61px) scaleX(0.8777);">Within step</div>
<div class="t" style="left:667px;top:209px;font-size:8.20px;color:#9a9a9a;transform:translate(0.00px,0.01px) scaleX(0.8944);">Within operation</div>
<div class="a" style="left:563.60px;top:241.20px;width:217.40px;height:12.40px;background:linear-gradient(#9eadd2,#8597c4 45%,#6f84b6 90%,#6478aa);"></div>
<div class="a" style="left:563.60px;top:253.40px;width:217.40px;height:18.60px;background:linear-gradient(#ffffff,#f8f8f8 35%,#e6e6e6 80%,#d8d8d8);"></div>
<div class="a" style="left:563.60px;top:272.00px;width:217.40px;height:289.00px;background:#f3f3f3;"></div>
<div class="a" style="left:563.60px;top:561.00px;width:217.40px;height:1.00px;background:#fcfcfc;"></div>
<div class="a" style="left:563.60px;top:562.00px;width:217.40px;height:1.00px;background:#8c8c8c;"></div>
<div class="a" style="left:780.00px;top:241.00px;width:1.00px;height:321.00px;background:#fcfcfc;"></div>
<div class="t" style="left:567px;top:242px;font-size:8.30px;color:#fff;font-weight:bold;transform:translate(0.20px,0.11px) scaleX(0.8365);text-shadow:0 0 1px #c8d4f0;">Tool fields</div>
<svg width="782" height="563" viewBox="0 0 782 563"><rect x="567.4" y="258.1" width="11.4" height="3.5" rx="1.2" fill="#f8f8f8" stroke="#9a9a9a" stroke-width="0.8"/><rect x="567.4" y="264.8" width="11.4" height="3.5" rx="1.2" fill="#f8f8f8" stroke="#9a9a9a" stroke-width="0.8"/><rect x="570.3" y="260.1" width="5.6" height="6.2" fill="#86d0c6" stroke="#2c9490" stroke-width="0.8"/><rect x="581.6" y="255.9" width="14.2" height="14" fill="#ffb030" stroke="#f09a18" stroke-width="0.8"/><rect x="583.0" y="258.1" width="11.4" height="3.5" rx="1.2" fill="#8ed6ce" stroke="#2c9490" stroke-width="0.8"/><rect x="583.0" y="264.8" width="11.4" height="3.5" rx="1.2" fill="#8ed6ce" stroke="#2c9490" stroke-width="0.8"/><rect x="585.9" y="260.1" width="5.6" height="6.2" fill="#fafafa" stroke="#b0b0b0" stroke-width="0.8"/><rect x="598.8" y="258.1" width="11.4" height="3.5" rx="1.2" fill="#8ed6ce" stroke="#2c9490" stroke-width="0.8"/><rect x="598.8" y="264.8" width="11.4" height="3.5" rx="1.2" fill="#8ed6ce" stroke="#2c9490" stroke-width="0.8"/><rect x="601.7" y="260.1" width="5.6" height="6.2" fill="#86d0c6" stroke="#2c9490" stroke-width="0.8"/><rect x="613.8" y="256.4" width="0.8" height="12.6" fill="#a8a8a8"/><rect x="614.6" y="256.4" width="0.8" height="12.6" fill="#fcfcfc"/><ellipse cx="626" cy="265.8" rx="4.4" ry="2" fill="#3868a8"/><rect x="621.6" y="262" width="8.8" height="3.8" fill="#4878b8"/><rect x="626.4" y="259.2" width="4" height="6.8" fill="#d83020"/><ellipse cx="628.4" cy="259.4" rx="2" ry="0.9" fill="#f06050"/><rect x="619.6" y="256.6" width="8.4" height="7.8" fill="#e4ecf4" stroke="#7088a8" stroke-width="0.6"/><path d="M620.4,263 l2.6,-2.2 l1.6,0.8 l2.8,-3.4" fill="none" stroke="#d83020" stroke-width="0.8"/></svg>
<div class="a" style="left:569.20px;top:278.00px;width:0.80px;height:54.85px;background:#c6c6c6;"></div>
<div class="a" style="left:581.40px;top:306.74px;width:0.80px;height:17.34px;background:#c6c6c6;"></div>
<div class="a" style="left:581.40px;top:340.85px;width:0.80px;height:105.70px;background:#c6c6c6;"></div>
<div class="a" style="left:593.10px;top:397.70px;width:0.80px;height:37.48px;background:#c6c6c6;"></div>
<div class="a" style="left:593.10px;top:454.55px;width:0.80px;height:60.22px;background:#c6c6c6;"></div>
<div class="a" style="left:569.60px;top:278.00px;width:5.60px;height:0.80px;background:#c6c6c6;"></div>
<div class="t" style="left:576px;top:274px;font-size:8.20px;color:#101010;transform:translate(0.60px,0.21px) scaleX(0.8607);">Plain surface</div>
<div class="a" style="left:569.60px;top:289.37px;width:5.60px;height:0.80px;background:#c6c6c6;"></div>
<div class="t" style="left:576px;top:285px;font-size:8.20px;color:#101010;transform:translate(0.60px,0.58px) scaleX(0.8993);">Temperature</div>
<div class="a" style="left:572.30px;top:300.74px;width:2.90px;height:0.80px;background:#c6c6c6;"></div>
<svg class="a" style="left:564px;top:296px" width="12" height="12" viewBox="0 0 12 12"><rect x="3.35" y="3.29" width="4.70" height="4.70" rx="0.5" fill="#fdfdfd" stroke="#8a8a8a" stroke-width="0.85"/><rect x="4.30" y="5.24" width="2.8" height="0.8" fill="#4a5ab4"/></svg>
<div class="t" style="left:576px;top:296px;font-size:8.20px;color:#101010;transform:translate(0.60px,0.95px) scaleX(0.8620);">Mesh parameters</div>
<div class="a" style="left:581.80px;top:312.11px;width:5.60px;height:0.80px;background:#c6c6c6;"></div>
<div class="t" style="left:588px;top:308px;font-size:8.20px;color:#101010;transform:translate(0.70px,0.32px) scaleX(0.8759);">Defined adaptation</div>
<div class="a" style="left:581.80px;top:323.48px;width:5.60px;height:0.80px;background:#c6c6c6;"></div>
<div class="t" style="left:588px;top:319px;font-size:8.20px;color:#101010;transform:translate(0.70px,0.69px) scaleX(0.8567);">Defined element size</div>
<div class="a" style="left:572.30px;top:334.85px;width:2.90px;height:0.80px;background:#c6c6c6;"></div>
<svg class="a" style="left:564px;top:330px" width="12" height="12" viewBox="0 0 12 12"><rect x="3.35" y="3.40" width="4.70" height="4.70" rx="0.5" fill="#fdfdfd" stroke="#8a8a8a" stroke-width="0.85"/><rect x="4.30" y="5.35" width="2.8" height="0.8" fill="#4a5ab4"/></svg>
<div class="t" style="left:576px;top:331px;font-size:8.20px;color:#101010;transform:translate(0.60px,0.06px) scaleX(0.9018);">Simulation of tools with interaction</div>
<div class="a" style="left:581.80px;top:346.22px;width:5.60px;height:0.80px;background:#c6c6c6;"></div>
<div class="t" style="left:588px;top:342px;font-size:8.20px;color:#101010;transform:translate(0.70px,0.43px) scaleX(0.8750);">Displacement vector</div>
<div class="a" style="left:581.80px;top:357.59px;width:5.60px;height:0.80px;background:#c6c6c6;"></div>
<div class="t" style="left:588px;top:353px;font-size:8.20px;color:#101010;transform:translate(0.70px,0.80px) scaleX(0.8585);">Displacement X</div>
<div class="a" style="left:581.80px;top:368.96px;width:5.60px;height:0.80px;background:#c6c6c6;"></div>
<div class="t" style="left:588px;top:365px;font-size:8.20px;color:#101010;transform:translate(0.70px,0.17px) scaleX(0.8607);">Displacement Y</div>
<div class="a" style="left:581.80px;top:380.33px;width:5.60px;height:0.80px;background:#c6c6c6;"></div>
<div class="t" style="left:588px;top:376px;font-size:8.20px;color:#101010;transform:translate(0.70px,0.54px) scaleX(0.8654);">Displacement Z</div>
<div class="a" style="left:584.50px;top:391.70px;width:2.90px;height:0.80px;background:#c6c6c6;"></div>
<svg class="a" style="left:576px;top:387px" width="12" height="12" viewBox="0 0 12 12"><rect x="3.55" y="3.25" width="4.70" height="4.70" rx="0.5" fill="#fdfdfd" stroke="#8a8a8a" stroke-width="0.85"/><rect x="4.50" y="5.20" width="2.8" height="0.8" fill="#4a5ab4"/></svg>
<div class="t" style="left:588px;top:387px;font-size:8.20px;color:#101010;transform:translate(0.70px,0.91px) scaleX(0.7875);">Stress</div>
<div class="a" style="left:593.50px;top:403.07px;width:5.60px;height:0.80px;background:#c6c6c6;"></div>
<div class="t" style="left:600px;top:399px;font-size:8.20px;color:#101010;transform:translate(0.60px,0.28px) scaleX(0.8255);">Mean Stress</div>
<div class="a" style="left:593.50px;top:414.44px;width:5.60px;height:0.80px;background:#c6c6c6;"></div>
<div class="a" style="left:599.00px;top:410.04px;width:50.40px;height:10.80px;background:#1c2f7c;"></div>
<div class="t" style="left:600px;top:410px;font-size:8.20px;color:#fff;transform:translate(0.60px,0.65px) scaleX(0.8343);">Effective Stress</div>
<div class="a" style="left:596.20px;top:425.81px;width:2.90px;height:0.80px;background:#c6c6c6;"></div>
<svg class="a" style="left:588px;top:421px" width="12" height="12" viewBox="0 0 12 12"><rect x="3.25" y="3.36" width="4.70" height="4.70" rx="0.5" fill="#fdfdfd" stroke="#8a8a8a" stroke-width="0.85"/><rect x="4.20" y="5.31" width="2.8" height="0.8" fill="#4a5ab4"/><rect x="5.20" y="4.31" width="0.8" height="2.8" fill="#4a5ab4"/></svg>
<div class="t" style="left:600px;top:422px;font-size:8.20px;color:#101010;transform:translate(0.60px,0.02px) scaleX(0.8218);">Stress tensor</div>
<div class="a" style="left:596.20px;top:437.18px;width:2.90px;height:0.80px;background:#c6c6c6;"></div>
<svg class="a" style="left:588px;top:433px" width="12" height="12" viewBox="0 0 12 12"><rect x="3.25" y="2.73" width="4.70" height="4.70" rx="0.5" fill="#fdfdfd" stroke="#8a8a8a" stroke-width="0.85"/><rect x="4.20" y="4.68" width="2.8" height="0.8" fill="#4a5ab4"/><rect x="5.20" y="3.68" width="0.8" height="2.8" fill="#4a5ab4"/></svg>
<div class="t" style="left:600px;top:433px;font-size:8.20px;color:#101010;transform:translate(0.60px,0.39px) scaleX(0.8342);">Principal stresses</div>
<div class="a" style="left:584.50px;top:448.55px;width:2.90px;height:0.80px;background:#c6c6c6;"></div>
<svg class="a" style="left:576px;top:444px" width="12" height="12" viewBox="0 0 12 12"><rect x="3.55" y="3.10" width="4.70" height="4.70" rx="0.5" fill="#fdfdfd" stroke="#8a8a8a" stroke-width="0.85"/><rect x="4.50" y="5.05" width="2.8" height="0.8" fill="#4a5ab4"/></svg>
<div class="t" style="left:588px;top:444px;font-size:8.20px;color:#101010;transform:translate(0.70px,0.76px) scaleX(0.8356);">Strain</div>
<div class="a" style="left:593.50px;top:459.92px;width:5.60px;height:0.80px;background:#c6c6c6;"></div>
<div class="t" style="left:600px;top:456px;font-size:8.20px;color:#101010;transform:translate(0.60px,0.13px) scaleX(0.8541);">Plastic strain</div>
<div class="a" style="left:593.50px;top:471.29px;width:5.60px;height:0.80px;background:#c6c6c6;"></div>
<div class="t" style="left:600px;top:467px;font-size:8.20px;color:#101010;transform:translate(0.60px,0.50px) scaleX(0.8390);">Elastic strain</div>
<div class="a" style="left:593.50px;top:482.66px;width:5.60px;height:0.80px;background:#c6c6c6;"></div>
<div class="t" style="left:600px;top:478px;font-size:8.20px;color:#101010;transform:translate(0.60px,0.87px) scaleX(0.8437);">Effective Strain</div>
<div class="a" style="left:593.50px;top:494.03px;width:5.60px;height:0.80px;background:#c6c6c6;"></div>
<div class="t" style="left:600px;top:490px;font-size:8.20px;color:#101010;transform:translate(0.60px,0.24px) scaleX(0.8909);">Volumetric strain</div>
<div class="a" style="left:596.20px;top:505.40px;width:2.90px;height:0.80px;background:#c6c6c6;"></div>
<svg class="a" style="left:588px;top:501px" width="12" height="12" viewBox="0 0 12 12"><rect x="3.25" y="2.95" width="4.70" height="4.70" rx="0.5" fill="#fdfdfd" stroke="#8a8a8a" stroke-width="0.85"/><rect x="4.20" y="4.90" width="2.8" height="0.8" fill="#4a5ab4"/><rect x="5.20" y="3.90" width="0.8" height="2.8" fill="#4a5ab4"/></svg>
<div class="t" style="left:600px;top:501px;font-size:8.20px;color:#101010;transform:translate(0.60px,0.61px) scaleX(0.8539);">Strain tensor</div>
<div class="a" style="left:596.20px;top:516.77px;width:2.90px;height:0.80px;background:#c6c6c6;"></div>
<svg class="a" style="left:588px;top:512px" width="12" height="12" viewBox="0 0 12 12"><rect x="3.25" y="3.32" width="4.70" height="4.70" rx="0.5" fill="#fdfdfd" stroke="#8a8a8a" stroke-width="0.85"/><rect x="4.20" y="5.27" width="2.8" height="0.8" fill="#4a5ab4"/><rect x="5.20" y="4.27" width="0.8" height="2.8" fill="#4a5ab4"/></svg>
<div class="t" style="left:600px;top:512px;font-size:8.20px;color:#101010;transform:translate(0.60px,0.98px) scaleX(0.8702);">Principal strain</div>
<div class="a" style="left:564.00px;top:327.00px;width:140.00px;height:198.60px;border:2.1px solid #cc0a14;"></div>
</body></html>
